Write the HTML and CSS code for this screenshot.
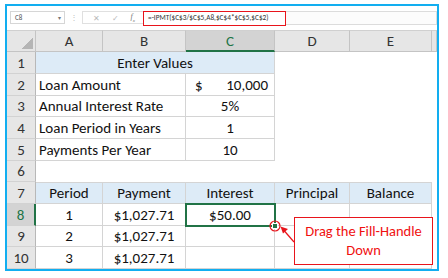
FILE: index.html
```html
<!DOCTYPE html>
<html lang="en">
<head>
  <meta charset="UTF-8" />
  <title>IPMT Fill Handle</title>
  <link rel="stylesheet" href="styles.css">
</head>
<body>
  <div class="frame">
    <div class="fbar">
      <div class="namebox"><span>C8</span><span class="caret">&#9662;</span></div>
      <div class="dots">&#8942;</div>
      <div class="btns"><span>&#10005;</span><span>&#10003;</span><span class="fx">f<sub>x</sub></span></div>
      <div class="formula">=-IPMT($C$3/$C$5,A8,$C$4*$C$5,$C$2)</div>
      <div class="rest"></div>
    </div>

    <div class="sheet">
      <!-- column headers -->
      <div class="ch corner"></div>
      <div class="ch">A</div>
      <div class="ch">B</div>
      <div class="ch sel">C</div>
      <div class="ch">D</div>
      <div class="ch">E</div>
      <div class="ch"></div>

      <!-- row 1 -->
      <div class="rh">1</div>
      <div class="c fillb b center span3">Enter Values</div>
      <div class="c"></div><div class="c"></div><div class="c"></div>

      <!-- rows 2-5 -->
      <div class="rh">2</div>
      <div class="c b span2">Loan Amount</div>
      <div class="c b money"><span>$</span><span>10,000</span></div>
      <div class="c"></div><div class="c"></div><div class="c"></div>

      <div class="rh">3</div>
      <div class="c b span2">Annual Interest Rate</div>
      <div class="c b center">5%</div>
      <div class="c"></div><div class="c"></div><div class="c"></div>

      <div class="rh">4</div>
      <div class="c b span2">Loan Period in Years</div>
      <div class="c b center">1</div>
      <div class="c"></div><div class="c"></div><div class="c"></div>

      <div class="rh">5</div>
      <div class="c b span2">Payments Per Year</div>
      <div class="c b center">10</div>
      <div class="c"></div><div class="c"></div><div class="c"></div>

      <!-- row 6 -->
      <div class="rh">6</div>
      <div class="c"></div><div class="c"></div><div class="c"></div>
      <div class="c"></div><div class="c"></div><div class="c"></div>

      <!-- row 7 -->
      <div class="rh">7</div>
      <div class="c b top fillb center">Period</div>
      <div class="c b top fillb center">Payment</div>
      <div class="c b top fillb center">Interest</div>
      <div class="c b top fillb center">Principal</div>
      <div class="c b top fillb center">Balance</div>
      <div class="c"></div>

      <!-- row 8 -->
      <div class="rh sel">8</div>
      <div class="c b center">1</div>
      <div class="c b center">$1,027.71</div>
      <div class="c b center active">$50.00<span class="handle"></span></div>
      <div class="c b"></div>
      <div class="c b"></div>
      <div class="c"></div>

      <!-- row 9 -->
      <div class="rh">9</div>
      <div class="c b center">2</div>
      <div class="c b center">$1,027.71</div>
      <div class="c b"></div>
      <div class="c b"></div>
      <div class="c b"></div>
      <div class="c"></div>

      <!-- row 10 -->
      <div class="rh">10</div>
      <div class="c b center">3</div>
      <div class="c b center">$1,027.71</div>
      <div class="c b"></div>
      <div class="c b"></div>
      <div class="c b"></div>
      <div class="c"></div>

      <svg class="marks" viewBox="0 0 430 239" width="430" height="239">
        <circle cx="268" cy="196" r="5" fill="none" stroke="#e8141b" stroke-width="1.2"/>
        <line x1="287" y1="212" x2="277" y2="200.5" stroke="#e8141b" stroke-width="1.2"/>
        <polygon points="273.5,196.5 281,199 276,203.5" fill="#e8141b"/>
      </svg>

      <div class="callout">Drag the Fill-Handle<br>Down</div>
    </div>
  </div>
</body>
</html>
```

FILE: styles.css
```css
* { box-sizing: border-box; }

body {
  margin: 0;
  background: #fff;
  font-family: Carlito, Lato, "Liberation Sans", sans-serif;
  color: #111;
}

.frame {
  margin: 4px 0 0 5px;
  width: 434px;
  height: 267px;
  border: 2px solid #12aef0;
  overflow: hidden;
  background: #fff;
}

/* formula bar */
.fbar {
  height: 24px;
  display: flex;
  align-items: flex-start;
  padding-top: 5px;
  padding-left: 3px;
  font-size: 7px;
  color: #555;
}

.namebox {
  width: 55px;
  height: 13px;
  border: 1px solid #d6d6d6;
  display: flex;
  align-items: center;
  justify-content: space-between;
  padding: 0 3px 0 4px;
}

.caret { font-size: 6px; color: #777; }

.dots {
  width: 17px;
  text-align: center;
  color: #c0c0c0;
  font-size: 8px;
  line-height: 13px;
}

.btns {
  width: 61px;
  height: 13px;
  border: 1px solid #e0e0e0;
  border-right: none;
  display: flex;
  align-items: center;
  justify-content: space-around;
  padding: 0 2px 0 4px;
  color: #b9b9b9;
  font-size: 8px;
}

.fx {
  font-family: "Liberation Serif", serif;
  font-style: italic;
  color: #777;
}
.fx sub { font-size: 5px; }

.formula {
  width: 143px;
  height: 15px;
  border: 1.5px solid #e8141b;
  padding-left: 4px;
  line-height: 12px;
  font-size: 7.3px;
  color: #333;
  white-space: nowrap;
}

.rest {
  flex: 1;
  height: 14px;
  border: 1px solid #dcdcdc;
  border-left: none;
  background: #fcfcfc;
}

/* sheet grid */
.sheet {
  position: relative;
  display: grid;
  grid-template-columns: 29px 67px 83px 89px 75px 82px 5px;
  grid-template-rows: 22px 22px 22px 21px 22px 22px 21px 22px 22px 21px 22px;
  font-size: 15px;
}

.ch, .rh {
  background: #e6e6e6;
  color: #333;
  display: flex;
  align-items: center;
  justify-content: center;
  border-right: 1px solid #c4c4c4;
  border-bottom: 1px solid #c4c4c4;
}

.ch { border-top: 1px solid #d0d0d0; }

.rh { border-bottom-color: #d2d2d2; border-right-color: #b8b8b8; }

.ch.sel {
  background: #d3d3d3;
  color: #217346;
  border-bottom: 2px solid #217346;
}

.rh.sel {
  background: #d3d3d3;
  color: #217346;
  border-right: 2px solid #217346;
}

.corner {
  background: linear-gradient(135deg, #e6e6e6 62%, #b5b5b5 62%);
  background-size: 15px 15px;
  background-repeat: no-repeat;
  background-position: right 2px bottom 2px;
  background-color: #e6e6e6;
}

.c {
  display: flex;
  align-items: center;
  padding: 0 3px;
  white-space: nowrap;
}

.b {
  border-right: 1px solid #d4d4d4;
  border-bottom: 1px solid #d4d4d4;
}

.top { border-top: 1px solid #d4d4d4; }

.center { justify-content: center; }

.span2 { grid-column: span 2; }
.span3 { grid-column: span 3; }

.fillb { background: #ddebf7; }

.money {
  justify-content: space-between;
  padding: 0 6px 0 9px;
}

.active {
  position: relative;
  outline: 2px solid #217346;
  outline-offset: -1px;
}

.handle {
  position: absolute;
  right: -4px;
  bottom: -4px;
  width: 6px;
  height: 6px;
  background: #217346;
  border: 1px solid #fff;
}

.marks {
  position: absolute;
  left: 0;
  top: 0;
  pointer-events: none;
}

.callout {
  position: absolute;
  left: 287px;
  top: 187px;
  width: 139px;
  height: 48px;
  border: 1.5px solid #e8141b;
  background: #fff;
  color: #f01010;
  text-align: center;
  font-size: 14.5px;
  line-height: 19px;
  padding-top: 4px;
}
```
